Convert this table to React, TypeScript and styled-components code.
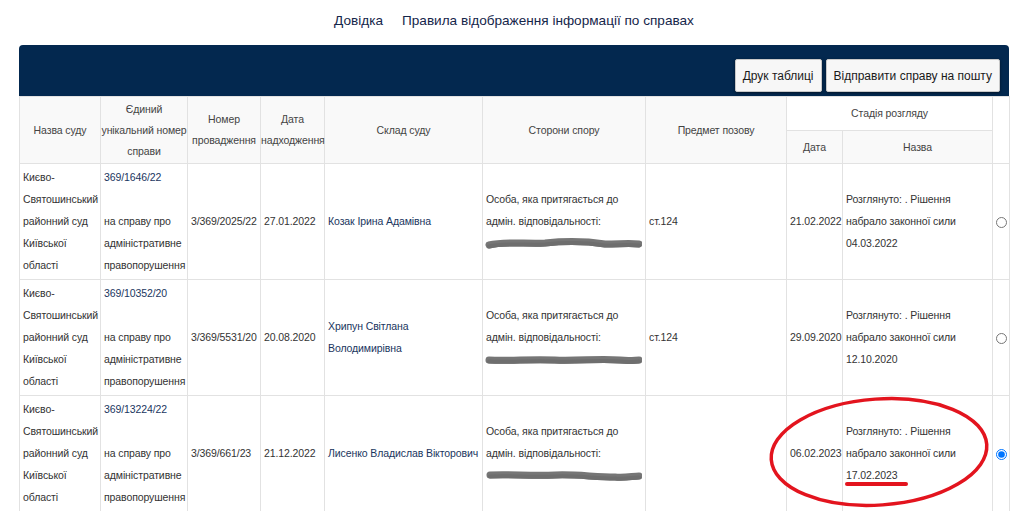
import React from "react";
import styled, { createGlobalStyle } from "styled-components";

const GlobalStyle = createGlobalStyle`
  html, body { margin: 0; padding: 0; background: #fff; }
  body { font-family: "Liberation Sans", Arial, Helvetica, sans-serif; color: #333; }
`;

const Page = styled.div`
  position: relative;
  width: 990px;
  margin-left: 19px;
`;

const TopNav = styled.nav`
  height: 45px;
  box-sizing: border-box;
  padding-top: 13px;
  display: flex;
  justify-content: center;
  gap: 19px;
  font-size: 13.6px;
  line-height: 16px;
`;

const NavLink = styled.a`
  color: #15264a;
  text-decoration: none;
`;

const Panel = styled.div`
  height: 51px;
  box-sizing: border-box;
  background: #03284f;
  border-radius: 4px 4px 0 0;
  display: flex;
  justify-content: flex-end;
  align-items: flex-end;
  gap: 4px;
  padding: 0 9px 4px 0;
`;

const ToolButton = styled.button`
  height: 33px;
  padding: 0 7px;
  font-family: inherit;
  font-size: 12px;
  color: #1a1a1a;
  background: #f7f7f7;
  border: 1px solid #c8c8c8;
  border-radius: 2px;
  box-shadow: 0 1px 3px rgba(0, 0, 0, 0.5);
`;

const Table = styled.table`
  width: 990px;
  table-layout: fixed;
  border-collapse: collapse;
  font-size: 10.5px;
  letter-spacing: -0.1px;
`;

const HeadRow = styled.tr<{ $h: number }>`
  height: ${(p) => p.$h}px;
`;

const Th = styled.th<{ $bg?: string }>`
  font-weight: normal;
  color: #444;
  line-height: 21px;
  padding: 1px 0;
  text-align: center;
  vertical-align: middle;
  background: ${(p) => p.$bg || "#f9f9f9"};
  border: 1px solid #e2e2e2;
`;

const Td = styled.td<{ $nowrap?: boolean; $center?: boolean }>`
  color: #333;
  line-height: 22px;
  padding: 2px 1px 3px 3px;
  vertical-align: middle;
  border: 1px solid #e2e2e2;
  background: #fff;
  white-space: ${(p) => (p.$nowrap ? "nowrap" : "normal")};
  text-align: ${(p) => (p.$center ? "center" : "left")};
  overflow: visible;
`;

const CaseLink = styled.a`
  color: #1a3660;
  text-decoration: none;
`;

const Line = styled.div`
  height: 22px;
`;

const Radio = styled.input`
  width: 11px;
  height: 11px;
  margin: 0 0 0 -1px;
  vertical-align: middle;
`;

const ScribbleSvg = styled.svg`
  display: block;
  width: 157px;
  height: 22px;
  margin-left: -1px;
`;

const Annotation = styled.svg`
  position: absolute;
  left: 749px;
  top: 392px;
  width: 240px;
  height: 119px;
  pointer-events: none;
`;

const scribbles = [
  "M4 13 C20 9 40 12 60 11 C80 9 100 9 120 12 C135 12 145 11 154 12",
  "M4 12 C25 13 45 11 70 12 C95 13 115 10 135 12 C145 13 150 12 154 12",
  "M5 11 C25 10 45 12 70 11 C90 10 110 13 130 13 C140 14 148 12 154 12",
];

const Scribble: React.FC<{ v: number }> = ({ v }) => (
  <ScribbleSvg viewBox="0 0 157 22">
    <path d={scribbles[v]} stroke="#767676" strokeWidth="7" fill="none" strokeLinecap="round" />
    <path d={scribbles[v]} stroke="#6e6e6e" strokeWidth="4" fill="none" strokeLinecap="round" transform="translate(0,1.5)" />
  </ScribbleSvg>
);

type Row = {
  num: string;
  proc: string;
  date: string;
  judge: React.ReactNode;
  subject: string;
  stageDate: string;
  stageEnd: string;
  checked: boolean;
};

const rows: Row[] = [
  {
    num: "369/1646/22",
    proc: "3/369/2025/22",
    date: "27.01.2022",
    judge: "Козак Ірина Адамівна",
    subject: "ст.124",
    stageDate: "21.02.2022",
    stageEnd: "04.03.2022",
    checked: false,
  },
  {
    num: "369/10352/20",
    proc: "3/369/5531/20",
    date: "20.08.2020",
    judge: (
      <>
        Хрипун Світлана
        <br />
        Володимирівна
      </>
    ),
    subject: "ст.124",
    stageDate: "29.09.2020",
    stageEnd: "12.10.2020",
    checked: false,
  },
  {
    num: "369/13224/22",
    proc: "3/369/661/23",
    date: "21.12.2022",
    judge: "Лисенко Владислав Вікторович",
    subject: "",
    stageDate: "06.02.2023",
    stageEnd: "17.02.2023",
    checked: true,
  },
];

const widths = [81, 87, 73, 64, 158, 163, 141, 56, 150, 17];

export default function App() {
  return (
    <>
      <GlobalStyle />
      <Page>
        <TopNav>
          <NavLink href="#">Довідка</NavLink>
          <NavLink href="#">Правила відображення інформації по справах</NavLink>
        </TopNav>
        <Panel>
          <ToolButton>Друк таблиці</ToolButton>
          <ToolButton>Відправити справу на пошту</ToolButton>
        </Panel>
        <Table>
          <colgroup>
            {widths.map((w, i) => (
              <col key={i} style={{ width: w }} />
            ))}
          </colgroup>
          <thead>
            <HeadRow $h={34}>
              <Th rowSpan={2}>Назва суду</Th>
              <Th rowSpan={2}>
                Єдиний
                <br />
                унікальний номер
                <br />
                справи
              </Th>
              <Th rowSpan={2}>
                Номер
                <br />
                провадження
              </Th>
              <Th rowSpan={2}>
                Дата
                <br />
                надходження
              </Th>
              <Th rowSpan={2}>Склад суду</Th>
              <Th rowSpan={2}>Сторони спору</Th>
              <Th rowSpan={2}>Предмет позову</Th>
              <Th colSpan={2} $bg="#fff">
                Стадія розгляду
              </Th>
              <Th rowSpan={2} $bg="#fff"></Th>
            </HeadRow>
            <HeadRow $h={33}>
              <Th>Дата</Th>
              <Th>Назва</Th>
            </HeadRow>
          </thead>
          <tbody>
            {rows.map((r, i) => (
              <tr key={r.num}>
                <Td>Києво-Святошинський районний суд Київської області</Td>
                <Td>
                  <CaseLink href="#">{r.num}</CaseLink>
                  <br />
                  <br />
                  на справу про адміністративне правопорушення
                </Td>
                <Td $nowrap>{r.proc}</Td>
                <Td $nowrap>{r.date}</Td>
                <Td $nowrap>
                  <CaseLink href="#">{r.judge}</CaseLink>
                </Td>
                <Td>
                  <Line>Особа, яка притягається до</Line>
                  <Line>адмін. відповідальності:</Line>
                  <Line>
                    <Scribble v={i} />
                  </Line>
                </Td>
                <Td>{r.subject}</Td>
                <Td $nowrap>{r.stageDate}</Td>
                <Td $nowrap>
                  Розглянуто: . Рішення
                  <br />
                  набрало законної сили
                  <br />
                  {r.stageEnd}
                </Td>
                <Td $center>
                  <Radio type="radio" name="case" defaultChecked={r.checked} />
                </Td>
              </tr>
            ))}
          </tbody>
        </Table>
        <Annotation viewBox="0 0 240 119">
          <ellipse
            cx="111"
            cy="60"
            rx="108"
            ry="53"
            transform="rotate(-4 111 60)"
            fill="none"
            stroke="#e3141e"
            strokeWidth="3.5"
          />
          <path d="M79 92 L138 92" stroke="#e3141e" strokeWidth="4" strokeLinecap="round" />
        </Annotation>
      </Page>
    </>
  );
}
